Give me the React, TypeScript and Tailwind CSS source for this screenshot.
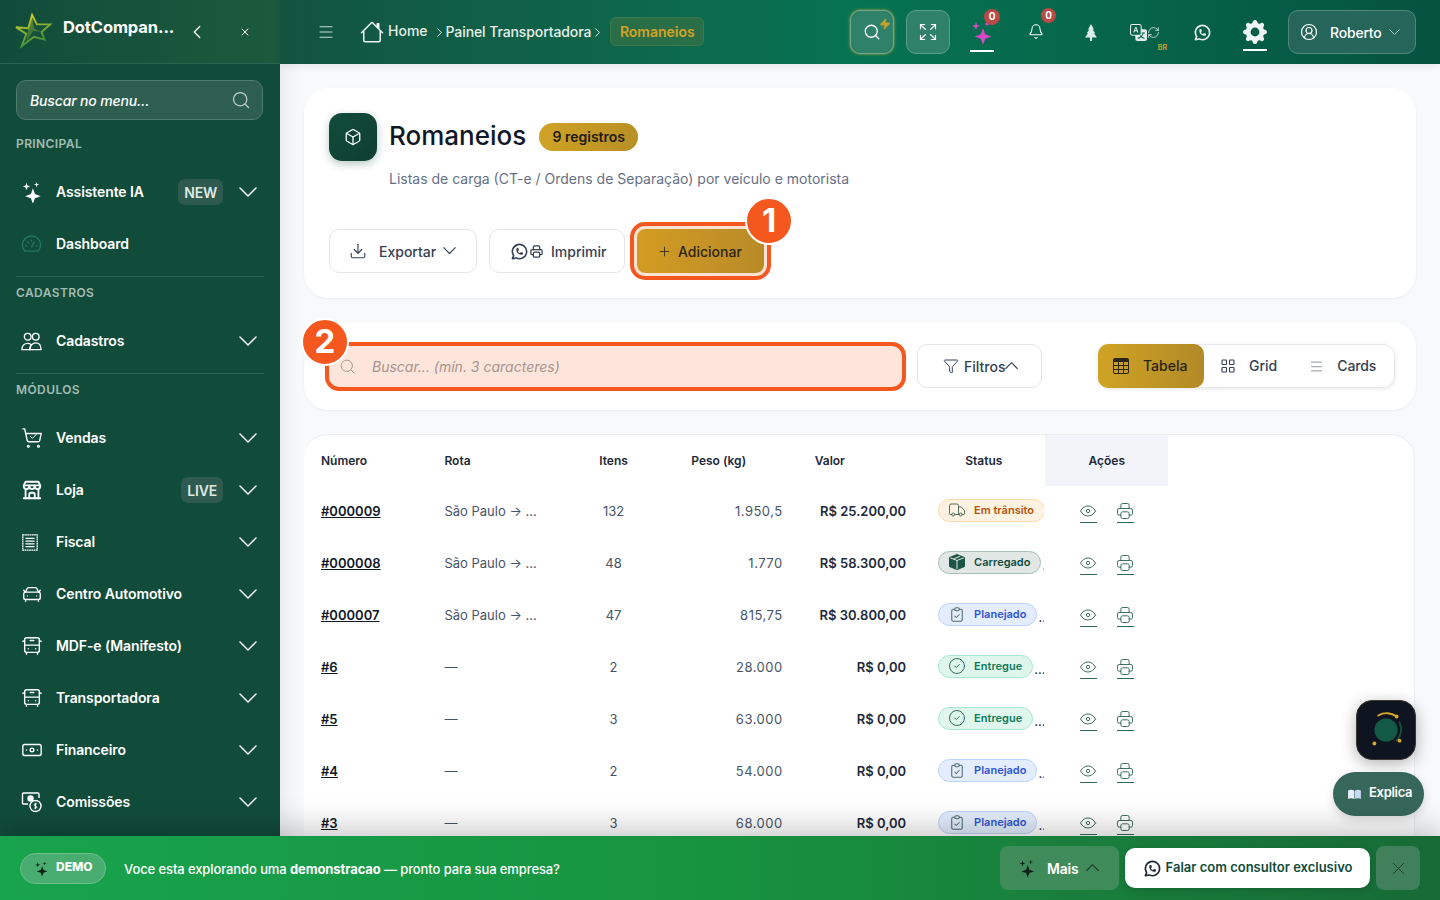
import React from 'react';
import {
  ChevronLeft, X, Search, Menu, ChevronRight, ShoppingCart, Check, Plus, Download, Expand, RefreshCw, Bell, Zap,
  CircleUserRound, Box, Truck, CircleCheck, Filter, CarFront, BusFront, Banknote,
} from 'lucide-react';
import {
  TbBuildingStore, TbBrandWhatsapp, TbPrinter, TbEye, TbClipboardCheck, TbLayoutGrid,
} from 'react-icons/tb';
import { BsHouse, BsTranslate, BsTable, BsBoxSeamFill, BsGearFill } from 'react-icons/bs';

const Star4 = ({ className }: { className?: string }) => (
  <svg viewBox="0 0 24 24" className={className} fill="currentColor">
    <path d="M13 8l2.200 6.300 6.300 2.200-6.300 2.200L13 25l-2.200-6.300-6.300-2.200 6.300-2.200z" />
    <path d="M6 2l1 3 3 1-3 1-1 3-1-3-3-1 3-1z" />
    <path d="M17 1l.7 2.300L20 4l-2.300.7L17 7l-.7-2.300L14 4l2.300-.7z" />
  </svg>
);

const Chev = ({ w = 18, up = false, className }: { w?: number; up?: boolean; className?: string }) => (
  <svg viewBox="0 0 18 10" width={w} height={(w * 10) / 18} className={className} fill="none" stroke="currentColor" strokeWidth={1.5} strokeLinecap="round" strokeLinejoin="round">
    <path d={up ? 'M1 9l8-8 8 8' : 'M1 1l8 8 8-8'} />
  </svg>
);

const LogoStar = () => (
  <svg viewBox="0 0 40 40" className="w-[38px] h-[38px]" fill="none">
    <defs>
      <linearGradient id="lg" x1="0" y1="0" x2="0.4" y2="1">
        <stop offset="0" stopColor="#e8d62a" />
        <stop offset="1" stopColor="#3e8f3a" />
      </linearGradient>
    </defs>
    <path d="M18 2l5 10 14 0-9 8 3 8-11-3-13 10 5-13-11-7 13 1z" stroke="url(#lg)" strokeWidth="2" fill="#15503a" />
    <path d="M18 2l2 14 8 4-9-1-7 12 2-14z" fill="url(#lg)" opacity="0.45" />
  </svg>
);

const CartCheck = () => (
  <span className="relative w-[22px] h-[22px]">
    <ShoppingCart className="w-[22px] h-[22px]" strokeWidth={1.5} />
    <Check className="absolute left-[8px] top-[5px] w-[9px] h-[9px]" strokeWidth={2.5} />
  </span>
);

const GaugeIcon = () => (
  <svg viewBox="0 0 22 18" className="w-[21px] h-[18px] text-[#1f7a5c]" fill="none" stroke="currentColor" strokeWidth={1.4} strokeLinecap="round">
    <path d="M4 16.500h14a9.500 9.500 0 1 0-14 0z" />
    <path d="M11 12l3-5M5 11h1M16 11h1M11 5v1M7 7l.7.7" />
  </svg>
);

const PeopleIcon = () => (
  <svg viewBox="0 0 22 20" className="w-[21px] h-[19px]" fill="none" stroke="currentColor" strokeWidth={1.4}>
    <circle cx="7" cy="5" r="3.500" />
    <circle cx="15.500" cy="5" r="3.500" />
    <path d="M1 18.500c0-4 2.500-6.500 6-6.500 1.500 0 2.800.4 3.800 1.300-1 1.200-1.500 3-1.500 5.200z" />
    <path d="M9.300 18.500c0-4 2.700-7 6.200-7s5.500 3 5.500 7z" />
  </svg>
);

const ReceiptIcon = () => (
  <svg viewBox="0 0 20 20" className="w-[18px] h-[19px]" fill="none" stroke="currentColor" strokeWidth={1.4}>
    <path d="M2 1.500h16v17H2z" strokeDasharray="2 0.500" />
    <path d="M5 5.500h10M5 8.500h10M5 11.500h10M5 14.500h10" />
  </svg>
);

const ComissaoIcon = () => (
  <svg viewBox="0 0 22 22" className="w-[22px] h-[22px]" fill="none" stroke="currentColor" strokeWidth={1.4}>
    <path d="M7 13H2.500a1 1 0 0 1-1-1V3a1 1 0 0 1 1-1H17a1 1 0 0 1 1 1v4" />
    <circle cx="9.500" cy="7.500" r="2.500" fill="currentColor" />
    <circle cx="14.500" cy="15" r="5.500" />
    <path d="M16 13.200c-1-.8-3-.6-3 .7s3 .9 3 2.200-2 1.500-3 .7M14.500 11.800v6.400" strokeWidth={1} />
  </svg>
);

const PineIcon = () => (
  <svg viewBox="0 0 16 20" className="w-[14px] h-[17px] text-[#dcebe5]" fill="currentColor">
    <path d="M8 0l3.500 6.500H10L13 11h-1.500L15 16H9.200v4H6.800v-4H1l3.500-5H3l3-4.500H4.500z" />
  </svg>
);

type NavItem = { label: string; icon: React.ReactNode; badge?: string; noChevron?: boolean };

const ic = 'w-[22px] h-[22px]';
const sections: { title: string; items: NavItem[] }[] = [
  {
    title: 'PRINCIPAL',
    items: [
      { label: 'Assistente IA', icon: <Star4 className={ic} />, badge: 'NEW' },
      { label: 'Dashboard', icon: <GaugeIcon />, noChevron: true },
    ],
  },
  { title: 'CADASTROS', items: [{ label: 'Cadastros', icon: <PeopleIcon /> }] },
  {
    title: 'MÓDULOS',
    items: [
      { label: 'Vendas', icon: <CartCheck /> },
      { label: 'Loja', icon: <TbBuildingStore className={ic} />, badge: 'LIVE' },
      { label: 'Fiscal', icon: <ReceiptIcon /> },
      { label: 'Centro Automotivo', icon: <CarFront className={ic} strokeWidth={1.5} /> },
      { label: 'MDF-e (Manifesto)', icon: <BusFront className={ic} strokeWidth={1.5} /> },
      { label: 'Transportadora', icon: <BusFront className={ic} strokeWidth={1.5} /> },
      { label: 'Financeiro', icon: <Banknote className={ic} strokeWidth={1.5} /> },
      { label: 'Comissões', icon: <ComissaoIcon /> },
    ],
  },
];

const Sidebar = () => (
  <aside className="w-[280px] shrink-0 h-full bg-[#114c3b] flex flex-col text-white overflow-hidden shadow-[4px_0_20px_rgba(0,0,0,0.08)] z-10">
    <div className="h-16 shrink-0 flex items-center border-b border-[#2b6350] bg-gradient-to-r from-[#114c3b] to-[#1c5a3c] pl-[15px]">
      <LogoStar />
      <span className="ml-[10px] w-[112px] -mt-[9px] text-[16.500px] font-bold tracking-[-0.1px] whitespace-nowrap">DotCompan...</span>
      <ChevronLeft className="ml-[11px] w-[22px] h-[22px]" strokeWidth={1.4} />
      <X className="ml-[31px] w-[12px] h-[12px]" strokeWidth={2} />
    </div>
    <div className="px-4 pt-4 flex flex-col">
      <div className="h-10 w-[247px] rounded-[10px] bg-[#2d5e4f] border border-[#4f7c6c] flex items-center pl-[13px] pr-[11px] justify-between">
        <span className="text-[14px] italic font-medium tracking-[-0.15px]">Buscar no menu...</span>
        <Search className="w-[20px] h-[20px] text-[#c3d3cd]" strokeWidth={1.5} />
      </div>
      {sections.map((s, i) => (
        <div key={s.title} className={i === 0 ? 'mt-4' : 'mt-[6px] border-t border-[#2b6350] pt-2'}>
          <div className="text-[12px] leading-4 font-semibold tracking-[0.4px] text-[#a3bcb3] mb-[14px]">{s.title}</div>
          {s.items.map((it) => (
            <div key={it.label} className="h-[52px] flex items-center">
              <span className="w-[40px] pl-[5px] flex items-center">{it.icon}</span>
              <span className="text-[14px] font-semibold tracking-[-0.1px] flex-1 pb-[2px]">{it.label}</span>
              {it.badge && (
                <span className="h-[26px] px-[6px] rounded-[7px] bg-[#2e5a4f] text-[14px] font-semibold tracking-[-0.2px] flex items-center text-[#dfe8e4] mr-[16px]">
                  {it.badge}
                </span>
              )}
              {!it.noChevron && <Chev className="mr-[7px]" />}
            </div>
          ))}
        </div>
      ))}
    </div>
  </aside>
);

const Topbar = () => (
  <header className="h-16 shrink-0 bg-gradient-to-r from-[#125440] via-[#067352] to-[#05533f] flex items-center text-white shadow-[0_2px_8px_rgba(0,0,0,0.08)] z-10">
    <Menu className="ml-[37px] w-[18px] h-[18px] text-[#c5d9d2]" strokeWidth={1.5} />
    <BsHouse className="ml-[25px] w-[24px] h-[24px] text-[#eef4f1]" />
    <span className="ml-[4px] -mt-[3px] text-[14px] font-medium text-[#e7efeb]">Home</span>
    <ChevronRight className="ml-[4px] w-[15px] h-[15px] -mr-[1px]" strokeWidth={1.4} />
    <span className="text-[14px] font-medium tracking-[-0.1px] text-[#e7efeb] pb-[2px]">Painel Transportadora</span>
    <ChevronRight className="w-[15px] h-[15px] -mr-[2px] -ml-[1px]" strokeWidth={1.4} />
    <span className="ml-[7px] h-[29px] w-[94px] -mt-[1px] flex items-center justify-center rounded-[6px] bg-[#2a6e47] border border-[#3a7a4d] text-[14px] font-semibold text-[#d5a425]">
      Romaneios
    </span>
    <div className="ml-auto flex items-center pr-6">
      <div className="relative w-[44px] h-[44px] rounded-[10px] bg-[#2f8269] border border-[#74a88f] flex items-center justify-center shadow-[0_0_3px_#b5a53c]">
        <Search className="w-[18px] h-[18px]" strokeWidth={1.7} />
        <Zap className="absolute right-[2px] top-[7px] w-[12px] h-[12px] text-[#c5a02c] fill-[#c5a02c]" />
      </div>
      <div className="ml-3 w-[44px] h-[44px] rounded-[10px] bg-[#2f8269] border border-[#5e9c87] flex items-center justify-center">
        <Expand className="w-[20px] h-[20px]" strokeWidth={1.4} />
      </div>
      <div className="relative ml-[20px] w-[24px] h-[37px] flex items-center justify-center border-b-2 border-white mt-[2px]">
        <Star4 className="w-[24px] h-[24px] text-[#d946c8]" />
        <span className="absolute -right-[6px] -top-[6px] w-[16px] h-[16px] rounded-full bg-[#b94a48] text-[10px] font-bold flex items-center justify-center">0</span>
      </div>
      <div className="relative ml-[34px] w-[16px] flex justify-center -mt-[1px]">
        <Bell className="w-[17px] h-[17px]" strokeWidth={1.6} />
        <span className="absolute -right-[12px] -top-[15px] w-[15px] h-[15px] rounded-full bg-[#b94a48] text-[10px] font-bold flex items-center justify-center">0</span>
      </div>
      <div className="ml-[40px]"><PineIcon /></div>
      <div className="relative ml-[32px] flex items-center w-[32px]">
        <BsTranslate className="w-[17px] h-[17px] text-[#e5eeea]" />
        <RefreshCw className="w-[13px] h-[13px] text-[#cfe0da]" strokeWidth={1.6} />
        <span className="absolute right-[-5px] top-[19px] text-[7px] font-bold text-[#c5a02c]">BR</span>
      </div>
      <TbBrandWhatsapp className="ml-[31px] w-[19px] h-[19px] text-[#e5eeea]" />
      <div className="ml-[31px] w-[24px] h-[32px] flex items-center justify-center border-b-2 border-white mt-[6px] pb-1">
        <BsGearFill className="w-[24px] h-[24px] text-[#eef4f1]" />
      </div>
      <div className="ml-[21px] w-[128px] h-[44px] rounded-[10px] bg-[#26665a] border border-[#4f8a78] flex items-center pl-[11px]">
        <CircleUserRound className="w-[18px] h-[18px]" strokeWidth={1.6} />
        <span className="ml-[12px] text-[14px] font-medium tracking-[-0.2px]">Roberto</span>
        <Chev w={11} className="ml-[7px] text-[#b9d0c8]" />
      </div>
    </div>
  </header>
);

const PageHeader = () => (
  <section className="bg-white rounded-3xl h-[210px] pl-[25px] pt-[25px] shadow-[0_1px_3px_rgba(15,23,42,0.06)]">
    <div className="flex items-center">
      <div className="w-12 h-12 rounded-[13px] bg-gradient-to-br from-[#114c3b] to-[#0f3f31] flex items-center justify-center shadow-[0_3px_8px_rgba(17,76,59,0.3)]">
        <Box className="w-[18px] h-[18px] text-white" strokeWidth={1.7} />
      </div>
      <h1 className="ml-3 text-[26px] leading-8 font-medium text-[#101828] pb-[2px]">Romaneios</h1>
      <span className="ml-[13px] h-7 w-[99px] pb-[2px] rounded-full bg-gradient-to-r from-[#cfa324] to-[#b88f25] flex items-center justify-center text-[14px] font-semibold text-[#1e1a10]">
        9 registros
      </span>
    </div>
    <p className="ml-[60px] mt-2 text-[14px] leading-5 text-[#667085]">Listas de carga (CT-e / Ordens de Separação) por veículo e motorista</p>
    <div className="mt-[40px] flex gap-3">
      <button className="w-[148px] h-11 rounded-[10px] border border-[#e3e5ea] flex items-center pl-[19px] text-[14px] font-medium text-[#344054]">
        <Download className="w-[18px] h-[18px]" strokeWidth={1.5} />
        <span className="ml-[12px]">Exportar</span>
        <Chev w={13} className="ml-[7px]" />
      </button>
      <button className="w-[136px] h-11 rounded-[10px] border border-[#e3e5ea] flex items-center pl-[20px] text-[14px] font-medium text-[#344054]">
        <TbBrandWhatsapp className="w-[19px] h-[19px]" />
        <TbPrinter className="w-[15px] h-[15px]" />
        <span className="ml-[7px]">Imprimir</span>
      </button>
      <div className="relative">
        <button className="w-[127px] h-11 rounded-[8px] bg-gradient-to-r from-[#d39c22] to-[#b98a27] flex items-center pl-[20px] text-[14px] font-medium text-[#2d2414] outline outline-[3px] outline-[#fbe3d3] shadow-[0_0_0_7px_#f5581f]">
          <Plus className="w-[15px] h-[15px]" strokeWidth={1.3} />
          <span className="ml-[6px]">Adicionar</span>
        </button>
        <span className="absolute -right-[29px] -top-[32px] w-[48px] h-[48px] rounded-full bg-[#f5581f] border-2 border-white text-white text-[33px] font-bold flex items-center justify-center">1</span>
      </div>
    </div>
  </section>
);

const SearchBar = () => (
  <section className="mt-6 bg-white rounded-3xl h-[88px] flex items-center pl-[25px] shadow-[0_1px_3px_rgba(15,23,42,0.06)]">
    <div className="relative w-[573px] h-[41px] rounded-[10px] bg-[#fde5dc] flex items-center pl-[10px] shadow-[0_0_0_4px_#f5581f]">
      <Search className="w-[17px] h-[17px] text-[#a59a96]" strokeWidth={1.4} />
      <span className="ml-[16px] text-[14px] italic text-[#a8938e]">Buscar... (mín. 3 caracteres)</span>
      <span className="absolute -left-[28px] -top-[28px] w-[48px] h-[48px] rounded-full bg-[#f5581f] border-2 border-white text-white text-[33px] font-bold flex items-center justify-center">2</span>
    </div>
    <button className="ml-[15px] w-[125px] h-11 rounded-[10px] border border-[#e3e5ea] flex items-center pl-[25px] text-[14px] font-medium text-[#344054]">
      <Filter className="w-[16px] h-[16px]" strokeWidth={1.5} />
      <span className="ml-[5px]">Filtros</span>
      <Chev w={13} up strokeWidthHack />
    </button>
    <div className="ml-[56px] w-[297px] h-11 rounded-[12px] border border-[#e8e9ee] shadow-[0_1px_4px_rgba(15,23,42,0.1)] flex items-center text-[14px] font-medium text-[#344054]">
      <div className="w-[106px] h-11 rounded-[10px] -ml-px bg-gradient-to-r from-[#cfa324] to-[#b28a27] flex items-center pl-[15px] text-[#2a2415]">
        <BsTable className="w-[16px] h-[16px]" />
        <span className="ml-[14px] pb-[2px]">Tabela</span>
      </div>
      <TbLayoutGrid className="ml-[15px] w-[18px] h-[18px]" strokeWidth={1.5} />
      <span className="ml-[12px] pb-[2px]">Grid</span>
      <Menu className="ml-[32px] w-[15px] h-[15px] text-[#a8abb4]" strokeWidth={2} />
      <span className="ml-[13px] pb-[2px] tracking-[-0.1px]">Cards</span>
    </div>
  </section>
);

type Status = 'Em trânsito' | 'Carregado' | 'Planejado' | 'Entregue';

const statusStyle: Record<Status, { cls: string; icon: React.ReactNode }> = {
  'Em trânsito': { cls: 'bg-[#fef3e2] border-[#fbd9a8] text-[#b45309]', icon: <Truck className="w-[18px] h-[18px] text-[#4f6b5c]" strokeWidth={1.3} /> },
  Carregado: { cls: 'bg-[#e1e7e5] border-[#a9bdb6] text-[#114c3b]', icon: <BsBoxSeamFill className="w-4 h-4 text-[#1d5544]" /> },
  Planejado: { cls: 'bg-[#e3edfd] border-[#bcd3fa] text-[#2f55d4]', icon: <TbClipboardCheck className="w-[19px] h-[19px] text-[#4f6b6c]" strokeWidth={1.4} /> },
  Entregue: { cls: 'bg-[#def6ec] border-[#a8e6cf] text-[#0f7a5a]', icon: <CircleCheck className="w-[18px] h-[18px] text-[#2f6b56]" strokeWidth={1.3} /> },
};

const rows: { num: string; rota: string; itens: string; peso: string; valor: string; status: Status }[] = [
  { num: '#000009', rota: 'São Paulo → ...', itens: '132', peso: '1.950,5', valor: 'R$ 25.200,00', status: 'Em trânsito' },
  { num: '#000008', rota: 'São Paulo → ...', itens: '48', peso: '1.770', valor: 'R$ 58.300,00', status: 'Carregado' },
  { num: '#000007', rota: 'São Paulo → ...', itens: '47', peso: '815,75', valor: 'R$ 30.800,00', status: 'Planejado' },
  { num: '#6', rota: '—', itens: '2', peso: '28.000', valor: 'R$ 0,00', status: 'Entregue' },
  { num: '#5', rota: '—', itens: '3', peso: '63.000', valor: 'R$ 0,00', status: 'Entregue' },
  { num: '#4', rota: '—', itens: '2', peso: '54.000', valor: 'R$ 0,00', status: 'Planejado' },
  { num: '#3', rota: '—', itens: '3', peso: '68.000', valor: 'R$ 0,00', status: 'Planejado' },
];

const StatusBadge = ({ status }: { status: Status }) => {
  const s = statusStyle[status];
  return (
    <span className={`inline-flex items-center h-[23px] rounded-full border pl-[9px] pr-[10px] text-[11px] font-semibold shrink-0 pb-[1px] ${s.cls}`}>
      <span className="w-[18px] flex justify-center">{s.icon}</span>
      <span className="ml-[8px]">{status}</span>
    </span>
  );
};

const EyePrint = () => (
  <div className="flex justify-center gap-5 text-[#3d6f5e] pl-[1px]">
    <span className="w-[17px] flex justify-center border-b border-[#2f6b56] pb-[1px]"><TbEye className="w-[20px] h-[20px] shrink-0" strokeWidth={1.2} /></span>
    <span className="w-[17px] flex justify-center border-b border-[#2f6b56] pb-[1px]"><TbPrinter className="w-[20px] h-[20px] shrink-0" strokeWidth={1.2} /></span>
  </div>
);

const RomaneiosTable = () => (
  <section className="mt-6 mr-[1px] bg-white rounded-t-3xl border-r border-t border-[#eceef2] overflow-hidden h-[500px]">
    <table className="w-[864px] table-fixed border-collapse text-[13px] text-[#475467]">
      <thead>
        <tr className="h-[51px] text-[12px] font-semibold text-[#1d2939]">
          <th className="text-left font-semibold pl-[17px]">Número</th>
          <th className="text-left font-semibold pl-[17px]">Rota</th>
          <th className="text-center font-semibold pl-[2px]">Itens</th>
          <th className="text-left font-semibold pl-[17px]">Peso (kg)</th>
          <th className="text-left font-semibold pl-[17px]">Valor</th>
          <th className="text-center font-semibold pl-[2px]">Status</th>
          <th className="text-center font-semibold bg-[#f3f4f9] pl-[1px]">Ações</th>
        </tr>
      </thead>
      <tbody>
        {rows.map((r) => (
          <tr key={r.num} className="h-[52px]">
            <td className="pl-[17px] font-semibold text-[#101828] underline">{r.num}</td>
            <td className="pl-[17px]">{r.rota}</td>
            <td className="text-center pl-[2px]">{r.itens}</td>
            <td className="pr-[15px] text-right tracking-[0.5px]">{r.peso}</td>
            <td className="pr-[15px] text-right font-semibold text-[#1d2939]">{r.valor}</td>
            <td className="pl-[17px]">
              <div className="flex items-end overflow-hidden w-[106px] whitespace-nowrap mb-[3px]">
                <StatusBadge status={r.status} />
                <span className="ml-[1px] leading-[18px] text-[#1d2939]">...</span>
              </div>
            </td>
            <td><EyePrint /></td>
          </tr>
        ))}
      </tbody>
    </table>
  </section>
);

const Floating = () => (
  <>
    <div className="absolute left-[1356px] top-[700px] w-[60px] h-[60px] rounded-[16px] bg-[#0e1420] border border-[#3a3a30] flex items-center justify-center shadow-[0_4px_16px_rgba(0,0,0,0.3)]">
      <svg viewBox="0 0 60 60" className="w-[60px] h-[60px]" fill="none">
        <circle cx="30" cy="30" r="12" fill="#135a46" />
        <path d="M22 15a17 17 0 0 1 19 1" stroke="#d8a824" strokeWidth="2" strokeLinecap="round" />
        <path d="M44 22a17 17 0 0 1-3 19" stroke="#124d3c" strokeWidth="2" strokeLinecap="round" />
        <circle cx="41" cy="16" r="2" fill="#d8a824" />
        <circle cx="44" cy="41" r="2" fill="#d8a824" />
        <circle cx="18" cy="44" r="2" fill="#d8a824" />
      </svg>
    </div>
    <div className="absolute left-[1333px] top-[772px] w-[91px] h-[44px] rounded-full bg-[#37675b] flex items-center pl-[15px] text-white text-[13px] font-semibold tracking-[-0.3px] shadow-[0_4px_10px_rgba(0,0,0,0.15)]">
      <svg viewBox="0 0 14 12" className="w-[13px] h-[11px]">
        <path d="M0 1.500 C2 .5 5 .5 6.700 1.800 V11 C5 10 2 10 0 10.800z" fill="#e6eefb" />
        <path d="M14 1.500 C12 .5 9 .5 7.300 1.800 V11 C9 10 12 10 14 10.800z" fill="#c9d8f2" />
      </svg>
      <span className="ml-[8px] pb-[2px]">Explica</span>
    </div>
  </>
);

const DemoBanner = () => (
  <div className="absolute left-0 right-0 bottom-0 h-16 z-20 bg-gradient-to-r from-[#18a34d] via-[#17933f] to-[#176a36] flex items-center pl-5 pr-5 text-white shadow-[0_-8px_30px_rgba(0,0,0,0.22)]">
    <span className="w-[86px] h-[31px] rounded-full bg-[#48ad6f] border border-[#6cc08c] flex items-center pl-[13px] text-[12px] font-extrabold">
      <Star4 className="w-[15px] h-[15px] text-[#10231a]" />
      <span className="ml-[7px] pb-[2px]">DEMO</span>
    </span>
    <p className="ml-[18px] mt-[3px] text-[13px] font-medium tracking-[-0.1px]">
      Voce esta explorando uma <b className="font-bold">demonstracao</b> — pronto para sua empresa?
    </p>
    <div className="ml-auto w-[119px] h-11 rounded-[8px] bg-[#3f8c5a] flex items-center pl-[18px] text-[14px] font-semibold tracking-[-0.2px]">
      <Star4 className="w-[18px] h-[18px] text-[#10231a]" />
      <span className="ml-[11px]">Mais</span>
      <Chev w={13} up className="ml-[7px] text-[#1e3d2b]" />
    </div>
    <div className="ml-[6px] w-[245px] h-10 rounded-[10px] bg-white flex items-center justify-center text-[13px] font-semibold text-[#114c3b] shadow-[0_2px_6px_rgba(0,0,0,0.15)]">
      <TbBrandWhatsapp className="w-[19px] h-[19px] text-[#1f2937]" />
      <span className="ml-[4px]">Falar com consultor exclusivo</span>
    </div>
    <div className="ml-[6px] w-11 h-11 rounded-[8px] bg-[#40805a] flex items-center justify-center">
      <X className="w-[21px] h-[21px] text-[#1e3d2b]" strokeWidth={1.1} />
    </div>
  </div>
);

export default function App() {
  return (
    <div className="relative w-[1440px] h-[900px] overflow-hidden flex bg-[#f8f9fb] font-['Inter',sans-serif]">
      <Sidebar />
      <div className="flex-1 h-full flex flex-col min-w-0">
        <Topbar />
        <main className="flex-1 overflow-hidden pl-6 pr-6 pt-6">
          <PageHeader />
          <SearchBar />
          <RomaneiosTable />
        </main>
      </div>
      <Floating />
      <DemoBanner />
    </div>
  );
}
